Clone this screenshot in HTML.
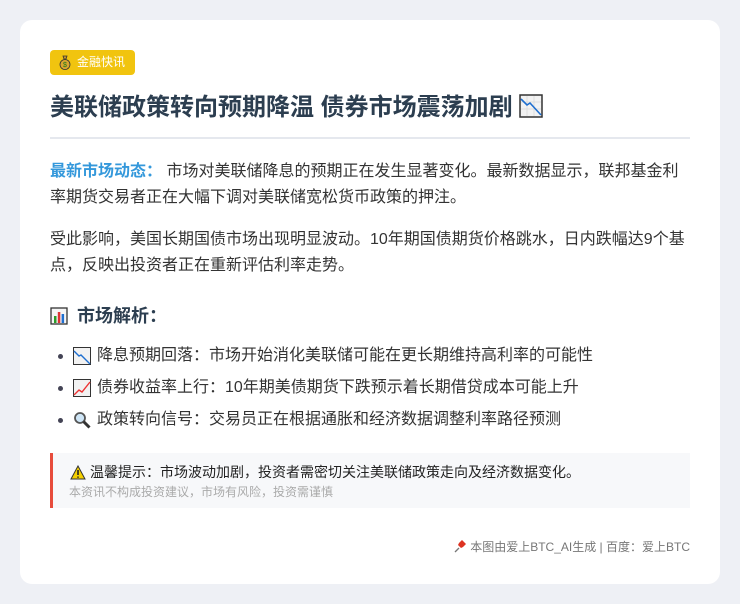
<!DOCTYPE html>
<html><head><meta charset="utf-8"><style>
*{margin:0;padding:0;box-sizing:border-box}
body{width:740px;height:604px;background:#eef0f5;font-family:"Liberation Sans","Noto Sans CJK SC",sans-serif;color:#333;overflow:hidden}
.card{position:absolute;left:20px;top:20px;width:700px;height:564px;background:#fff;border-radius:12px}
.badge{position:absolute;left:30px;top:30px;height:25px;width:85px;background:#f1c40f;border-radius:4px;color:#fff;font-size:12px;line-height:25px;padding-left:27px}
.badge svg{position:absolute;left:9px;top:5px}
h1{position:absolute;left:30px;top:72px;font-size:24px;line-height:32px;color:#2c3e50;font-weight:bold;white-space:nowrap}
.hr{position:absolute;left:30px;top:117px;width:640px;height:2px;background:#e5e8ee}
.p{position:absolute;left:30px;width:640px;font-size:16px;line-height:26px;color:#333}
.p b{color:#3498db}
h2{position:absolute;left:30px;top:283px;font-size:18px;line-height:26px;color:#2c3e50;font-weight:bold}
h2 svg{vertical-align:-3px;margin-right:9px}
.li{position:absolute;left:38px;font-size:16px;line-height:22px;color:#333;white-space:nowrap}
.li:before{content:"";position:absolute;left:0;top:9px;width:5px;height:5px;border-radius:50%;background:#445}
.li svg{position:absolute;left:15px;top:2px}
.li span{margin-left:39px}
.note{position:absolute;left:30px;top:433px;width:640px;height:55px;background:#f7f8fa;border-left:3px solid #e74c3c}
.n1{position:absolute;left:17px;top:9px;font-size:14px;color:#222;white-space:nowrap}
.n1 svg{vertical-align:-3px;margin-right:4px}
.n2{position:absolute;left:16px;top:30px;font-size:12px;color:#aaa;white-space:nowrap}
.foot{position:absolute;right:30px;top:518px;font-size:12px;color:#777;white-space:nowrap}
</style></head><body>
<div class="card">
<div class="badge"><svg width="12" height="15" viewBox="0 0 12 15"><path d="M4 1h4l-1 3h-2z" fill="#c8962a" stroke="#333" stroke-width=".8"/><ellipse cx="6" cy="9.5" rx="5" ry="5" fill="#d9a530" stroke="#333" stroke-width=".8"/><text x="6" y="12" font-size="7" text-anchor="middle" fill="#1a7a1a">$</text></svg>金融快讯</div>
<h1>美联储政策转向预期降温 债券市场震荡加剧 <svg width="24" height="24" viewBox="0 0 24 24" style="vertical-align:-3px"><rect x="1" y="1" width="22" height="22" fill="#f2f2f2" stroke="#333" stroke-width="1.5"/><path d="M8 2v20M15 2v20M2 8h20M2 15h20" stroke="#ddd"/><path d="M2 5l6 6 3-2 11 12" stroke="#1f6fd0" stroke-width="1.6" fill="none"/></svg></h1>
<div class="hr"></div>
<div class="p" style="top:139px"><b>最新市场动态：</b> 市场对美联储降息的预期正在发生显著变化。最新数据显示，联邦基金利率期货交易者正在大幅下调对美联储宽松货币政策的押注。</div>
<div class="p" style="top:207px">受此影响，美国长期国债市场出现明显波动。10年期国债期货价格跳水，日内跌幅达9个基点，反映出投资者正在重新评估利率走势。</div>
<h2><svg width="18" height="18" viewBox="0 0 18 18"><rect x="1" y="1" width="16" height="16" fill="#f5f5f5" stroke="#333" stroke-width="1.3"/><rect x="4" y="9" width="2.5" height="7" fill="#2a9d2a"/><rect x="7.8" y="5" width="2.5" height="11" fill="#d33"/><rect x="11.6" y="7" width="2.5" height="9" fill="#1f6fd0"/></svg>市场解析：</h2>
<div class="li" style="top:325px"><svg width="18" height="18" viewBox="0 0 18 18"><rect x=".5" y=".5" width="17" height="17" fill="#f2f2f2" stroke="#333"/><path d="M1 4l5 5 2-1 9 9" stroke="#1f6fd0" stroke-width="1.4" fill="none"/></svg><span>降息预期回落：市场开始消化美联储可能在更长期维持高利率的可能性</span></div>
<div class="li" style="top:357px"><svg width="18" height="18" viewBox="0 0 18 18"><rect x=".5" y=".5" width="17" height="17" fill="#f2f2f2" stroke="#333"/><path d="M1 16l5-5 3 2 8-10" stroke="#e33" stroke-width="1.4" fill="none"/></svg><span>债券收益率上行：10年期美债期货下跌预示着长期借贷成本可能上升</span></div>
<div class="li" style="top:389px"><svg width="18" height="18" viewBox="0 0 18 18"><circle cx="7" cy="7" r="5" fill="#cfe6f7" stroke="#555" stroke-width="1.8"/><path d="M10.5 10.5l6 6" stroke="#333" stroke-width="3"/></svg><span>政策转向信号：交易员正在根据通胀和经济数据调整利率路径预测</span></div>
<div class="note"><div class="n1"><svg width="16" height="15" viewBox="0 0 16 15"><path d="M8 1l7 13H1z" fill="#f5d000" stroke="#333" stroke-width="1"/><path d="M8 5v5M8 11.5v1.3" stroke="#222" stroke-width="1.6"/></svg>温馨提示：市场波动加剧，投资者需密切关注美联储政策走向及经济数据变化。</div><div class="n2">本资讯不构成投资建议，市场有风险，投资需谨慎</div></div>
<div class="foot"><svg width="14" height="14" viewBox="0 0 14 14" style="vertical-align:-2px"><path d="M2 13l4-4" stroke="#777" stroke-width="1.3"/><path d="M5 6l3 3 2-1 3-3-4-4-3 3z" fill="#d32"/></svg> 本图由爱上BTC_AI生成 | 百度：爱上BTC</div>
</div>
</body></html>
